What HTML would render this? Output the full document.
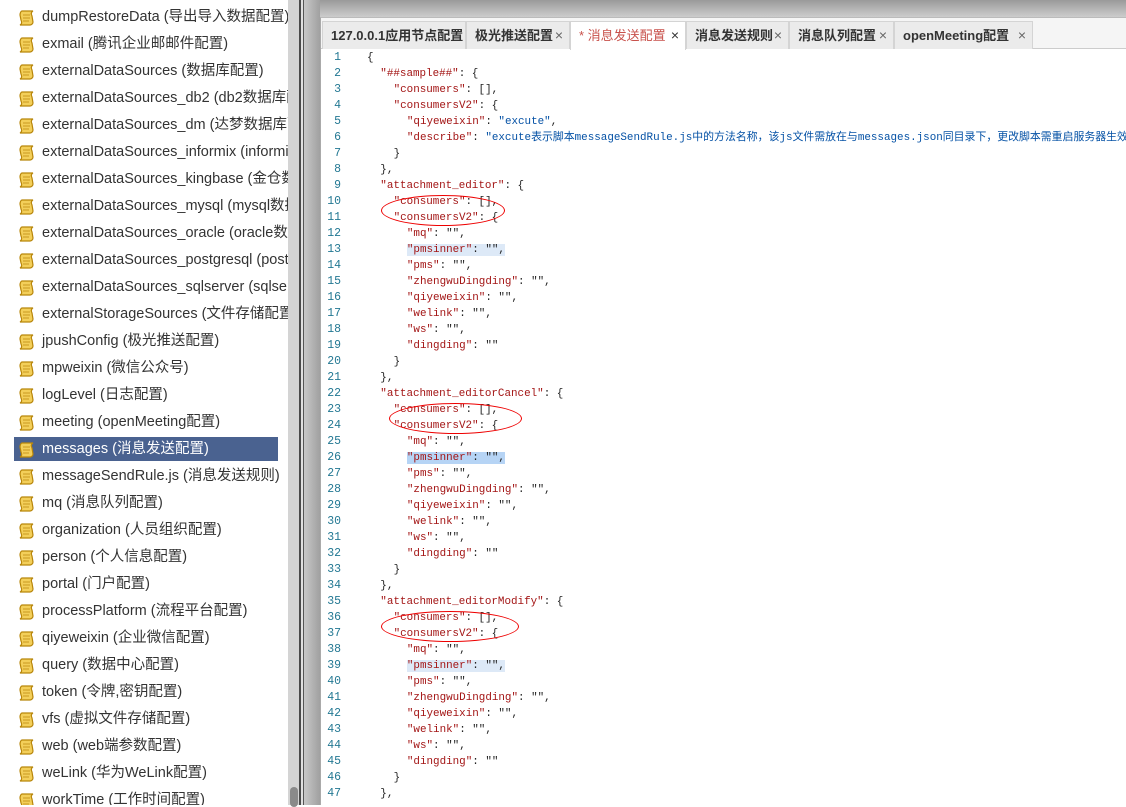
<!DOCTYPE html>
<html><head><meta charset="utf-8"><style>
*{margin:0;padding:0;box-sizing:border-box}
body{width:1126px;height:805px;overflow:hidden;background:#fff;position:relative;font-family:"Liberation Sans","Noto Sans CJK SC",sans-serif}
#left{position:absolute;left:0;top:0;width:288px;height:805px;background:#fff;overflow:hidden}
.it{position:absolute;left:14px;width:264px;height:24px;font-size:14.5px;color:#333;white-space:nowrap;line-height:24px;padding-left:28px}
.it svg{position:absolute;left:4px;top:4px}
.sel{background:#4a6290;color:#fff}
#sb{position:absolute;left:288px;top:0;width:11px;height:805px;background:#d4d4d4}
#thumb{position:absolute;left:290px;top:787px;width:8px;height:20px;background:#8a8a8a;border-radius:4px}
#div1{position:absolute;left:299px;top:0;width:2px;height:805px;background:#4a4a4a}
#div2{position:absolute;left:301px;top:0;width:2px;height:805px;background:#e0e0e0}
#div3{position:absolute;left:303px;top:0;width:1px;height:805px;background:#555}
#gut{position:absolute;left:304px;top:0;width:16px;height:805px;background:linear-gradient(90deg,#c8c8c8,#a0a0a0)}
#top{position:absolute;left:320px;top:0;width:806px;height:18px;background:linear-gradient(#9a9a9a,#cfcfcf)}
#ed{position:absolute;left:320px;top:17px;width:806px;height:788px;background:#fff;border-left:1px solid #aaa;border-top:1px solid #bbb;overflow:hidden}
#tabs{position:absolute;left:0;top:0;width:806px;height:31px;background:#f5f5f5;border-bottom:1px solid #ccc}
.tab{position:absolute;top:3px;height:28px;background:#ebebeb;border:1px solid #d4d4d4;border-bottom:none;font-size:13px;font-weight:bold;color:#333;line-height:27px;padding-left:8px;white-space:nowrap}
.tab .x{position:absolute;right:6px;top:0;font-weight:normal;color:#666;font-size:14px}
.act{background:#fff;color:#c8514b;font-weight:normal;height:29px}
.act .x{color:#333}
.ln{position:absolute;left:0;width:20px;text-align:right;font-family:"Liberation Mono",monospace;font-size:11.5px;color:#237893;line-height:16px;height:16px}
.cd{position:absolute;font-family:"Liberation Mono","Noto Sans CJK SC",monospace;font-size:10.9px;color:#222;white-space:pre;line-height:16px;height:16px}
.k{color:#a31515}.v{color:#0451a5}
.hl{background:#dde9f7}.hl2{background:#b6d4f5}
.ell{position:absolute;border:1.3px solid #e00;border-radius:50%}
</style></head><body>
<div id="left"></div>
<div id="sb"></div><div id="thumb"></div><div id="div1"></div><div id="div2"></div><div id="div3"></div><div id="gut"></div>
<div id="top"></div>
<div id="ed">
<div id="tabs">
<div class="tab" style="left:1px;width:144px">127.0.0.1应用节点配置</div>
<div class="tab" style="left:145px;width:104px">极光推送配置<span class="x">×</span></div>
<div class="tab act" style="left:249px;width:116px">* 消息发送配置<span class="x">×</span></div>
<div class="tab" style="left:365px;width:103px">消息发送规则<span class="x">×</span></div>
<div class="tab" style="left:468px;width:105px">消息队列配置<span class="x">×</span></div>
<div class="tab" style="left:573px;width:139px">openMeeting配置<span class="x">×</span></div>
</div>
<div id="code"></div>
</div>
<script>
var items=["dumpRestoreData (导出导入数据配置)","exmail (腾讯企业邮邮件配置)","externalDataSources (数据库配置)","externalDataSources_db2 (db2数据库配置)","externalDataSources_dm (达梦数据库配置)","externalDataSources_informix (informix数据库配置)","externalDataSources_kingbase (金仓数据库配置)","externalDataSources_mysql (mysql数据库配置)","externalDataSources_oracle (oracle数据库配置)","externalDataSources_postgresql (postgresql数据库配置)","externalDataSources_sqlserver (sqlserver数据库配置)","externalStorageSources (文件存储配置)","jpushConfig (极光推送配置)","mpweixin (微信公众号)","logLevel (日志配置)","meeting (openMeeting配置)","messages (消息发送配置)","messageSendRule.js (消息发送规则)","mq (消息队列配置)","organization (人员组织配置)","person (个人信息配置)","portal (门户配置)","processPlatform (流程平台配置)","qiyeweixin (企业微信配置)","query (数据中心配置)","token (令牌,密钥配置)","vfs (虚拟文件存储配置)","web (web端参数配置)","weLink (华为WeLink配置)","workTime (工作时间配置)"];
var ic='<svg width="18" height="17" viewBox="0 0 18 17"><path d="M4 2h11c-2 1-2 3-1 5l1 6c0 2-2 3-3 3H2c2-1 2-3 1-5L2 6c0-2 1-4 2-4z" fill="#f3cf5a" stroke="#b8860b" stroke-width="1.2"/><path d="M5 6h7M5 9h7M5 12h6" stroke="#c99a20" stroke-width="1"/></svg>';
var h='';items.forEach(function(t,i){h+='<div class="it'+(i==16?' sel':'')+'" style="top:'+(5+i*27)+'px">'+ic+t+'</div>'});
document.getElementById('left').innerHTML=h;
function K(s){return '<span class="k">"'+s+'"</span>'}
function V(s){return '<span class="v">"'+s+'"</span>'}
var L=[[0,'{'],[1,K('##sample##')+': {'],[2,K('consumers')+': [],'],[2,K('consumersV2')+': {'],[3,K('qiyeweixin')+': '+V('excute')+','],[3,K('describe')+': '+V('excute表示脚本messageSendRule.js中的方法名称，该js文件需放在与messages.json同目录下，更改脚本需重启服务器生效')],[2,'}'],[1,'},']];
var keys=['mq','pmsinner','pms','zhengwuDingding','qiyeweixin','welink','ws','dingding'];
['attachment_editor','attachment_editorCancel','attachment_editorModify'].forEach(function(n,bi){
L.push([1,K(n)+': {']);L.push([2,K('consumers')+': [],']);L.push([2,K('consumersV2')+': {']);
keys.forEach(function(k,j){var s=K(k)+': ""'+(j<7?',':'');if(k=='pmsinner')s='<span class="'+(bi==1?'hl2':'hl')+'">'+s+'</span>';L.push([3,s])});
L.push([2,'}']);L.push([1,'},']);});
var c='';L.forEach(function(l,i){var y=49+i*16;c+='<div class="ln" style="top:'+(y-17)+'px">'+(i+1)+'</div><div class="cd" style="top:'+(y-17)+'px;left:'+(46+l[0]*13.3)+'px">'+l[1]+'</div>'});
c+='<div class="ell" style="left:60px;top:177px;width:124px;height:31px"></div>';
c+='<div class="ell" style="left:68px;top:385px;width:133px;height:31px"></div>';
c+='<div class="ell" style="left:60px;top:593px;width:138px;height:31px"></div>';
document.getElementById('code').innerHTML=c;
</script>
</body></html>
